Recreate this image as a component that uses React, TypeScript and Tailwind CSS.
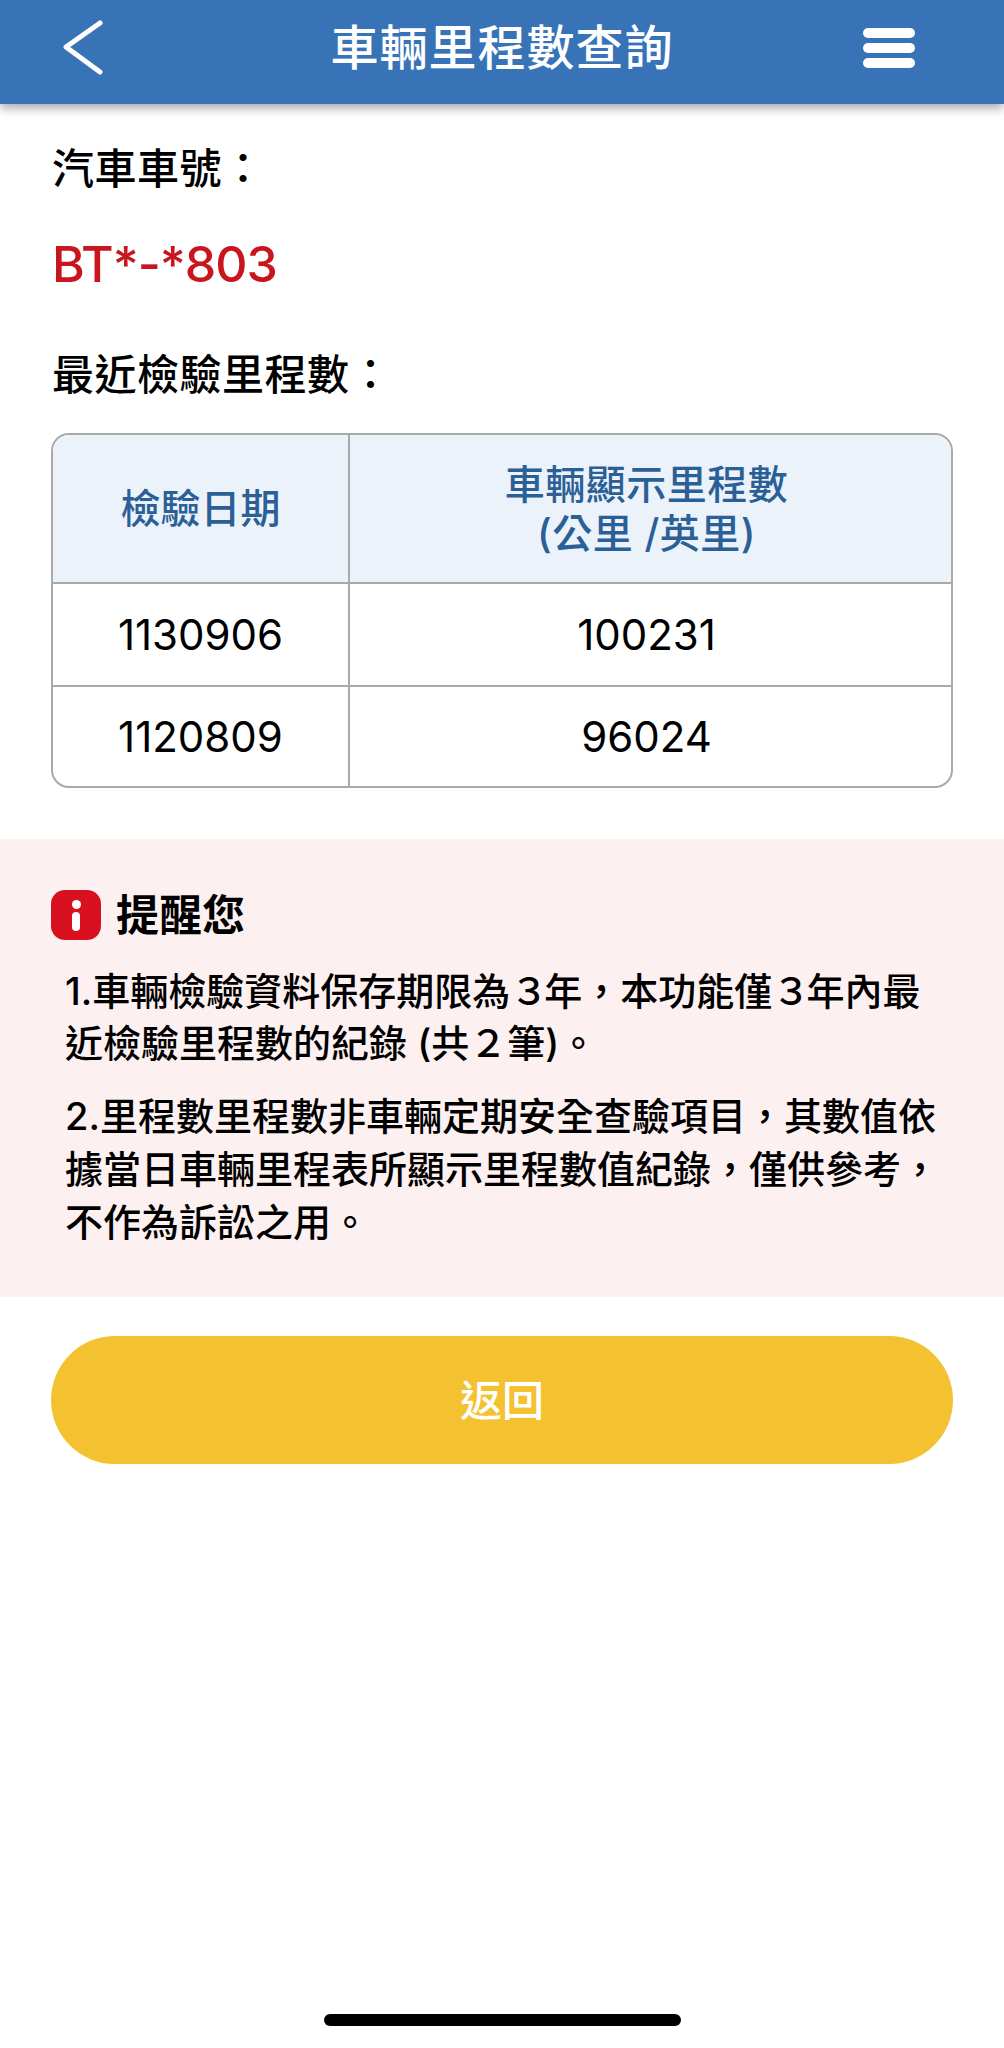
const font = { fontFamily: 'Inter, "Noto Sans CJK TC", sans-serif' };

const rows = [
  { date: "1130906", km: "100231" },
  { date: "1120809", km: "96024" },
];

const plateLabel = "汽車車號\uFF1A";
const mileageLabel = "最近檢驗里程數\uFF1A";
const noteTwo = ["2.里程數里程數非車輛定期安全查驗項目\uFF0C其數值依", "據當日車輛里程表所顯示里程數值紀錄\uFF0C僅供參考\uFF0C", "不作為訴訟之用\u3002"];

function Header() {
  return (
    <header className="relative z-10 flex h-[104px] items-center justify-between bg-[#3873b8] pb-[8px] shadow-[0_4px_10px_rgba(0,0,0,0.35)]">
      <div className="flex w-[300px] pl-[62px]">
        <svg width="42" height="56" viewBox="0 0 42 56" fill="none" stroke="white" strokeWidth="5" strokeLinecap="round" strokeLinejoin="round">
          <path d="M38 3 L4 27 L38 52" />
        </svg>
      </div>
      <h1 className="whitespace-nowrap text-[48px] font-medium leading-none tracking-[1px] text-white">車輛里程數查詢</h1>
      <div className="flex w-[300px] justify-end pr-[89px]">
        <div className="flex w-[52px] flex-col gap-[5px]">
          <div className="h-[10px] rounded-full bg-white" />
          <div className="h-[10px] rounded-full bg-white" />
          <div className="h-[10px] rounded-full bg-white" />
        </div>
      </div>
    </header>
  );
}

function MileageTable() {
  return (
    <div className="mx-[51px] mt-[32px] overflow-hidden rounded-[18px] border-[2px] border-[#a9a9a9]">
      <div className="flex h-[149px] border-b-[2px] border-[#a9a9a9] bg-[#ecf2fa] text-[#2b6097]">
        <div className="flex w-[297px] items-center justify-center border-r-[2px] border-[#a9a9a9] text-[40px] font-medium">檢驗日期</div>
        <div className="flex flex-1 flex-col items-center justify-center pr-[8px] text-center text-[40px] font-medium leading-[49px]">
          <span className="tracking-[0.5px]">車輛顯示里程數</span>
          <span className="tracking-[0.5px]">(公里 /英里)</span>
        </div>
      </div>
      {rows.map((row, index) => (
        <div key={row.date} className={`flex text-[42px] text-black ${index === 0 ? "h-[103px] border-b-[2px] border-[#a9a9a9]" : "h-[99px]"}`}>
          <div className="flex w-[297px] items-center justify-center border-r-[2px] border-[#a9a9a9]">{row.date}</div>
          <div className="flex flex-1 items-center justify-center pr-[8px]">{row.km}</div>
        </div>
      ))}
    </div>
  );
}

function Notice() {
  return (
    <section className="mt-[51px] h-[458px] bg-[#fcf0f1] pl-[51px] pr-[48px] pt-[51px]">
      <div className="flex items-center gap-[15px]">
        <div className="flex h-[50px] w-[50px] flex-col items-center justify-center gap-[3px] rounded-[14px] bg-[#d8101f]">
          <div className="h-[9px] w-[9px] rounded-full bg-white" />
          <div className="h-[19px] w-[8px] rounded-full bg-white" />
        </div>
        <h2 className="text-[43px] font-bold leading-[50px] text-black">提醒您</h2>
      </div>
      <div className="mt-[25px] pl-[14px] text-[38px] font-medium leading-[52px] text-black">
        <p>
          <span className="block">
            1.車輛檢驗資料保存期限為<span className="tracking-[-4px]">３</span>年{"\uFF0C"}本功能僅<span className="tracking-[-4px]">３</span>年內最
          </span>
          <span className="block">近檢驗里程數的紀錄 (共２筆){"\u3002"}</span>
        </p>
        <p className="mt-[21px] leading-[53px]">{noteTwo.map((line) => <span key={line} className="block">{line}</span>)}</p>
      </div>
    </section>
  );
}

export default function App() {
  return (
    <div className="relative h-[2048px] w-[1004px] overflow-hidden bg-white" style={font} lang="zh-TW">
      <Header />
      <div className="px-[52px] pt-[39px] text-[42px] font-medium leading-[52px] tracking-[0.5px] text-black">{plateLabel}</div>
      <div className="px-[52px] pt-[43px] text-[50px] font-medium leading-[52px] tracking-[-1px] text-[#c9151e]">BT*-*803</div>
      <div className="px-[52px] pt-[59px] text-[42px] font-medium leading-[52px] tracking-[0.5px] text-black">{mileageLabel}</div>
      <MileageTable />
      <Notice />
      <button className="mx-[51px] mt-[39px] block h-[128px] w-[902px] rounded-full bg-[#f4c230] text-[42px] font-medium text-white">返回</button>
      <div className="absolute bottom-[22px] left-[324px] h-[12px] w-[357px] rounded-full bg-black" />
    </div>
  );
}
